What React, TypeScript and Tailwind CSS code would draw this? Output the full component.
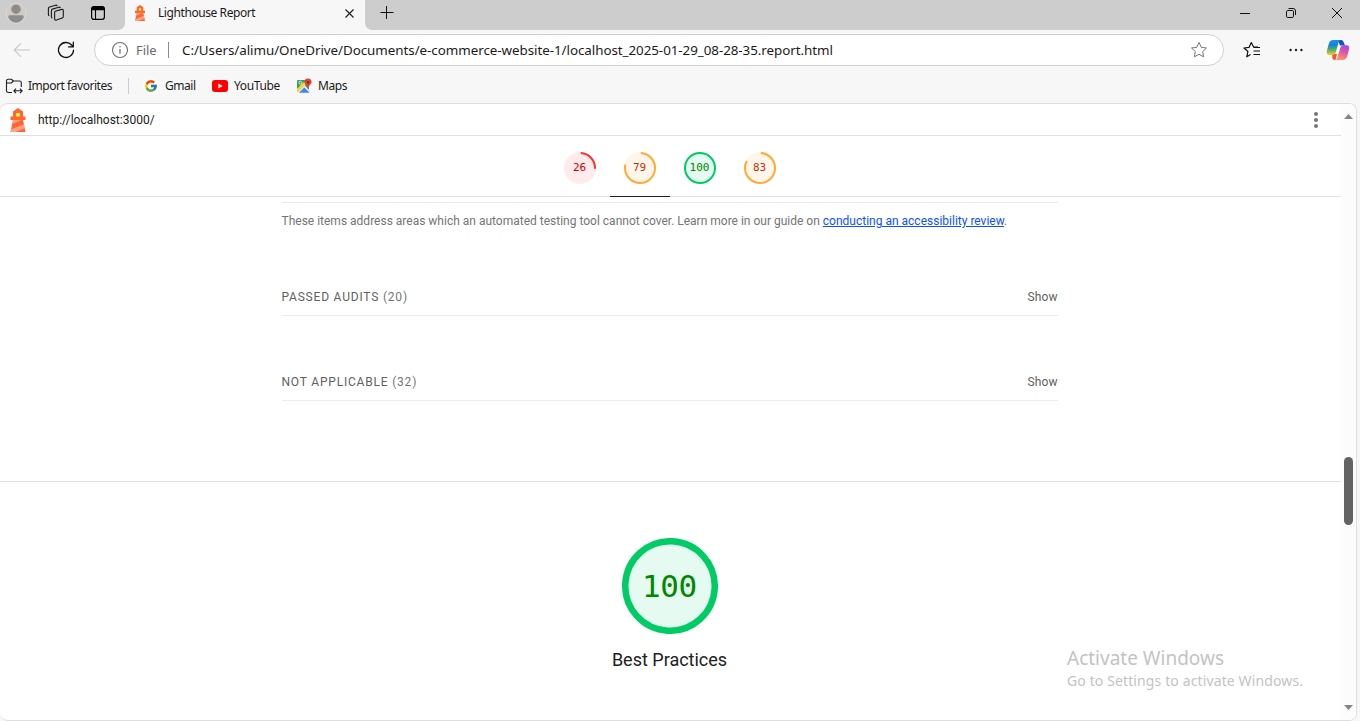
import React from 'react';
import { FcGoogle } from 'react-icons/fc';

function Lighthouse({ className }: { className: string }) {
  return (
    <svg viewBox="0 0 48 48" className={className}>
      <path d="m14 7 10-7 10 7v10h5v7h-5l5 24H9l5-24H9v-7h5V7Z" fill="#F63" />
      <path d="M31.561 24H14l-1.689 8.105L31.561 24ZM18.983 48H9l1.022-4.907L35.723 32.27l1.663 7.98L18.983 48Z" fill="#FFA385" />
      <path fill="#FF3" d="M20.5 10h7v7h-7z" />
    </svg>
  );
}

function Profile() {
  return (
    <svg viewBox="0 0 22 22" className="h-[22px] w-[22px]">
      <circle cx="11" cy="11" r="10" fill="#cfcbc7" stroke="#dcdad7" />
      <circle cx="11" cy="7.300" r="4.700" fill="#8f8b88" />
      <path d="M5.200 13.300h11.600a1.800 1.800 0 0 1 1.700 2.300C17.500 18.500 14.600 20.600 11 20.600s-6.500-2.100-7.500-5a1.800 1.800 0 0 1 1.700-2.300Z" fill="#8f8b88" />
    </svg>
  );
}

function Workspaces() {
  return (
    <svg viewBox="0 0 18 18" className="h-[18px] w-[18px]" fill="none" stroke="#1a1a1a" strokeWidth="1.1" strokeLinejoin="round">
      <path d="M8.300 7.200 14.700 5.400a1.200 1.200 0 0 1 1.600 1.100v6a1.700 1.700 0 0 1-1.200 1.600l-5.600 2a1.400 1.400 0 0 1-1.900-1.300V8.300a1.300 1.300 0 0 1 .7-1.100Z" />
      <path d="M5.300 14.200a1.500 1.500 0 0 1-.9-1.400V6.700c0-.8.400-1.300 1.100-1.600l6.200-1.900c.8-.2 1.400.100 1.700.8" />
      <path d="M2.300 11.800a1.500 1.500 0 0 1-.9-1.400V4.600c0-.8.400-1.300 1.100-1.600l6-1.800c.8-.2 1.400.1 1.700.8" />
    </svg>
  );
}

function TabActions() {
  return (
    <svg viewBox="0 0 16 16" className="h-4 w-4">
      <rect x="1.600" y="1.600" width="12.800" height="12.800" rx="2.300" fill="none" stroke="#000" strokeWidth="1.200" />
      <path d="M1.500 5.200V3.600a2.200 2.200 0 0 1 2.200-2.200h8.600a2.200 2.200 0 0 1 2.200 2.200v1.600Z" fill="#000" />
      <path d="M5.500 5v9.500" stroke="#000" strokeWidth="1.100" />
    </svg>
  );
}

function TitleBar() {
  return (
    <header className="flex h-[30px] shrink-0 items-stretch bg-[#f7f7f7]">
      <div className="flex w-[125px] items-start rounded-br-[7px] bg-[#cdcdcd] pl-[5px]">
        <div className="mt-[2px]"><Profile /></div>
        <div className="mt-1 ml-5"><Workspaces /></div>
        <div className="mt-[5px] ml-[25px]"><TabActions /></div>
      </div>
      <div className="flex w-[240px] items-start bg-[#f7f7f7] pl-[7px]">
        <Lighthouse className="mt-[5px] h-4 w-4" />
        <span className="mt-[5px] ml-[10px] w-[190px] text-[12px] leading-4 tracking-[-0.42px] whitespace-nowrap text-[#1b1b1b]">Lighthouse Report</span>
        <svg viewBox="0 0 9 9" className="mt-[9px] -ml-[3px] h-[9px] w-[9px] shrink-0" stroke="#222" strokeWidth="1.200"><path d="m.5.5 8 8m0-8-8 8" /></svg>
      </div>
      <div className="flex grow items-start rounded-bl-[7px] bg-[#cdcdcd]">
        <svg viewBox="0 0 14 14" className="mt-[6px] ml-[15px] h-[14px] w-[14px]" stroke="#111" strokeWidth="1"><path d="M.5 6.500h13M6.500 0v13" /></svg>
        <div className="grow" />
        <svg viewBox="0 0 10 10" className="mt-2 mr-9 h-[10px] w-[10px]" stroke="#111"><path d="M0 5.500h10" /></svg>
        <svg viewBox="0 0 10 10" className="mt-2 mr-9 h-[10px] w-[10px]" fill="none" stroke="#111"><rect x=".5" y="2.500" width="7" height="7" rx="1.300" /><path d="M2.500.5h4.500a2.500 2.500 0 0 1 2.500 2.500V7" /></svg>
        <svg viewBox="0 0 10 10" className="mt-2 mr-[18px] h-[10px] w-[10px]" stroke="#111"><path d="m0 0 10 10M10 0 0 10" /></svg>
      </div>
    </header>
  );
}

function Copilot() {
  return (
    <svg viewBox="0 0 24 22" className="h-[22px] w-6">
      <defs>
        <linearGradient id="cpLeft" x1="0" y1="0" x2="0" y2="1">
          <stop offset="0" stopColor="#168fe8" /><stop offset=".35" stopColor="#1683d8" /><stop offset=".65" stopColor="#4fb36a" /><stop offset=".95" stopColor="#f2c41c" />
        </linearGradient>
        <linearGradient id="cpRight" x1=".7" y1="0" x2=".4" y2="1">
          <stop offset="0" stopColor="#a14be8" /><stop offset=".45" stopColor="#dd56a5" /><stop offset="1" stopColor="#ff9567" />
        </linearGradient>
      </defs>
      <path d="M12 1h3c1.600 0 2.300 1 2.800 2.500L19 6.500h-5Z" fill="#1450c8" />
      <path d="M6 15h5l-1.500 6H9c-1.500 0-2.300-1-2.700-2.300Z" fill="#ec5a37" />
      <path d="M7.500 1h7.200c-1.200.3-1.800 1.200-2.200 2.700l-2.400 8.600C9.400 15 8.300 16 6 16H3.500C1 16 .3 14 .9 11.700l2-7.200C3.600 2.100 5 1 7.500 1Z" fill="url(#cpLeft)" />
      <path d="M16.500 21H9.300c1.200-.3 1.800-1.200 2.200-2.700L14 9.700C14.700 7 15.700 6.200 18 6.200h2.500c2.500 0 3.200 1.800 2.600 4.100l-2 7.200c-.7 2.400-2.100 3.500-4.600 3.500Z" fill="url(#cpRight)" />
      <path d="M13 7.200h2.300c-1 .5-1.500 1.400-1.900 2.800l-1 3.600c-.3 1-.8 1.500-1.700 1.500H9c1-.4 1.500-1.200 1.900-2.600l1-3.600c.2-.8.500-1.400 1.100-1.700Z" fill="#fff" />
    </svg>
  );
}

const STAR = 'M9 1.500 11.300 6.300l5.200.7-3.800 3.600.9 5.200L9 13.300l-4.600 2.500.9-5.200L1.500 7l5.200-.7Z';

function Toolbar() {
  return (
    <div className="flex h-10 shrink-0 items-center">
      <svg viewBox="0 0 18 16" className="ml-[13px] h-4 w-[18px]" fill="none" stroke="#c6c6c6" strokeWidth="1.100"><path d="M17 8H1.500M8 1.200 1.300 8 8 14.800" /></svg>
      <svg viewBox="0 0 18 18" className="ml-[26px] h-[18px] w-[18px]" fill="none" stroke="#111" strokeWidth="1.300" strokeLinecap="round"><path d="M16.500 9.200A7.500 7.500 0 1 1 14.600 4l1.600 1.700M16.300 1.200v4.700h-4.700" /></svg>
      <div className="ml-[19px] flex h-8 w-[1130px] items-center rounded-full border border-[#d0d0d0] bg-white pl-4">
        <svg viewBox="0 0 18 18" className="h-[18px] w-[18px]" fill="none" stroke="#6f6f6f" strokeWidth="1.100"><circle cx="9" cy="9" r="7.500" /><path d="M9 8v4.800M9 5v1.300" strokeWidth="1.300" /></svg>
        <span className="ml-[7px] w-8 pt-px text-[13px] tracking-[-0.05px] text-[#6a6a6a]">File</span>
        <span className="h-4 w-px bg-[#8a8a8a]" />
        <span className="ml-[13px] grow pt-px text-[13.400px] tracking-[-0.055px] whitespace-nowrap text-[#1b1b1b]">C:/Users/alimu/OneDrive/Documents/e-commerce-website-1/localhost_2025-01-29_08-28-35.report.html</span>
        <svg viewBox="0 0 18 18" className="mr-[15px] h-[18px] w-[18px]" fill="none" stroke="#767676" strokeWidth="1" strokeLinejoin="round"><path d={STAR} /></svg>
      </div>
      <svg viewBox="0 0 18 18" className="ml-[19px] h-[18px] w-[18px]" fill="none" stroke="#111" strokeWidth="1.200" strokeLinejoin="round"><path d="M7.500 13.400 3.800 15.800l1.100-5.300L1 7l5-.6L8.300 1.500 10.600 6H15M10.500 6.500H17M10.500 10H17M10.500 13.500H17" /></svg>
      <svg viewBox="0 0 14 4" className="ml-7 h-1 w-[14px]" fill="#222"><circle cx="1.600" cy="2" r="1.200" /><circle cx="7" cy="2" r="1.200" /><circle cx="12.400" cy="2" r="1.200" /></svg>
      <div className="ml-[23px]"><Copilot /></div>
    </div>
  );
}

function Favorites() {
  return (
    <div className="flex h-[33px] shrink-0 items-center pb-px text-[12px] whitespace-nowrap text-[#1b1b1b]">
      <svg viewBox="0 0 18 16" className="ml-[5px] h-4 w-[18px]" fill="none" stroke="#222" strokeWidth="1.100" strokeLinejoin="round">
        <path d="M7 14.500H3.300a1.800 1.800 0 0 1-1.800-1.800V3A1.800 1.800 0 0 1 3.300 1.200h3L8.500 3h6a1.800 1.800 0 0 1 1.800 1.800V9M1.500 5h4.800l2-2M9 12.800h8M11 10.600l-2.200 2.200L11 15M15 10.600l2.200 2.200L15 15" />
      </svg>
      <span className="ml-[5px] w-[100px] tracking-[-0.46px]">Import favorites</span>
      <span className="h-4 w-px bg-[#cccccc]" />
      <span className="ml-[14px] flex h-4 w-4 items-center justify-center rounded-full bg-white"><FcGoogle size={14} /></span>
      <span className="ml-[6px] w-[47px] tracking-[-0.45px]">Gmail</span>
      <svg viewBox="0 0 16 12" className="h-3 w-4"><rect width="16" height="12" rx="3" fill="#f00" /><path d="M6.400 3.500v5l4.300-2.500Z" fill="#fff" /></svg>
      <span className="ml-[6px] w-[62px] tracking-[-0.36px]">YouTube</span>
      <svg viewBox="0 0 16 16" className="h-4 w-4">
        <path d="M2 2h11v11.500H2a1 1 0 0 1-1-1V3a1 1 0 0 1 1-1Z" fill="#35a35a" />
        <path d="m1 13.500 7-7 6 6.500-.5 1.500H2Z" fill="#e8eaed" />
        <path d="m1 10 7-7 2.500 2.500L2.500 14Q1 14 1 12Z" fill="#f8d548" />
        <path d="m1 8 6-6h3L1 10.800Z" fill="#34a05a" />
        <path d="m3 14.800 5.300-5.300 5.300 5.300Z" fill="#4285f4" />
        <circle cx="4.300" cy="4.700" r="1.500" fill="none" stroke="#fff" strokeWidth=".8" />
        <path d="M12 .5a3.600 3.600 0 0 1 3.600 3.600c0 2.300-2.700 3.200-3.600 6.400-.9-3.200-3.600-4.100-3.600-6.400A3.600 3.600 0 0 1 12 .5Z" fill="#dc4437" />
        <circle cx="12" cy="4.200" r="1.200" fill="#8d2420" />
      </svg>
      <span className="ml-[6px] tracking-[-0.45px]">Maps</span>
    </div>
  );
}

const GAUGES = [
  { score: 26, ring: '#ff3333', fill: '#ffebeb', text: '#cc0000', selected: false },
  { score: 79, ring: '#ffaa33', fill: '#fff6eb', text: '#c33300', selected: true },
  { score: 100, ring: '#00cc66', fill: '#e5faf0', text: '#008800', selected: false },
  { score: 83, ring: '#ffaa33', fill: '#fff6eb', text: '#c33300', selected: false },
];

function Gauge({ score, ring, fill, size, stroke, rotate = -87 }: { score: number; ring: string; fill: string; size: number; stroke: number; rotate?: number }) {
  const r = size / 2 - stroke / 2;
  return (
    <svg viewBox={`0 0 ${size} ${size}`} width={size} height={size} className="col-start-1 row-start-1">
      <circle cx={size / 2} cy={size / 2} r={size / 2} fill={fill} />
      <circle cx={size / 2} cy={size / 2} r={r} fill="none" stroke={ring} strokeWidth={stroke} pathLength="100"
        strokeDasharray={score === 100 ? undefined : `${score - 1} 100`} strokeLinecap="butt" transform={`rotate(${rotate} ${size / 2} ${size / 2})`} />
    </svg>
  );
}

function Section({ title, count }: { title: string; count: number }) {
  return (
    <div className="mx-auto flex h-[39px] w-[776px] items-start justify-between border-b border-[#ebebeb] pt-[10px] text-[12px] leading-5 text-[#616161]">
      <span className="tracking-[0.8px]">{title} <span className="text-[#757575]">({count})</span></span>
      <span className="tracking-[0.1px]">Show</span>
    </div>
  );
}

function Report() {
  return (
    <main className="flex min-w-0 grow flex-col font-['Roboto',sans-serif]">
      <div className="flex h-8 shrink-0 items-center border-b border-[#e0e0e0]">
        <Lighthouse className="ml-[6px] h-6 w-6" />
        <span className="ml-2 grow text-[12px] text-[#212121]">http://localhost:3000/</span>
        <svg viewBox="0 0 4 16" className="mr-[23px] h-4 w-1" fill="#757575"><circle cx="2" cy="2" r="2" /><circle cx="2" cy="8" r="2" /><circle cx="2" cy="14" r="2" /></svg>
      </div>
      <div className="flex h-[61px] shrink-0 justify-center border-b border-[#e0e0e0] pr-[2px]">
        {GAUGES.map((g) => (
          <div key={g.score} className={g.selected ? 'grid h-[61px] w-[60px] grid-rows-[100%] items-start justify-items-center border-b border-[#212121] pt-4' : 'grid h-[61px] w-[60px] items-start justify-items-center pt-4'}>
            <Gauge score={g.score} ring={g.ring} fill={g.fill} size={32} stroke={2} />
            <span className="z-10 col-start-1 row-start-1 font-['DejaVu_Sans_Mono',monospace] text-[11px] leading-8" style={{ color: g.text }}>{g.score}</span>
          </div>
        ))}
      </div>
      <div className="flex grow flex-col pr-[2px]">
        <div className="mx-auto mt-[5px] h-[39px] w-[776px] shrink-0 border-t border-[#ebebeb] pt-2 text-[12px] leading-5 whitespace-nowrap text-[#757575]">
          These items address areas which an automated testing tool cannot cover. Learn more in our guide on <a className="text-[#0c50ff] underline">conducting an accessibility review</a>.
        </div>
        <div className="mt-9 shrink-0"><Section title="PASSED AUDITS" count={20} /></div>
        <div className="mt-[46px] shrink-0"><Section title="NOT APPLICABLE" count={32} /></div>
        <div className="mt-20 -mr-[2px] flex grow flex-col items-center border-t border-[#e0e0e0] pt-14 pr-[2px]">
          <div className="grid items-center justify-items-center">
            <Gauge score={100} ring="#00cc66" fill="#e5faf0" size={96} stroke={6.5} />
            <span className="z-10 col-start-1 row-start-1 font-['DejaVu_Sans_Mono',monospace] text-[31px] tracking-[-0.4px] text-[#008800]">100</span>
          </div>
          <div className="mt-[14px] text-[18px] leading-6 text-[#212121]">Best Practices</div>
        </div>
      </div>
    </main>
  );
}

export default function App() {
  return (
    <div className="relative flex h-[721px] w-[1360px] flex-col overflow-hidden bg-[#f7f7f7] font-['Noto_Sans','Open_Sans',sans-serif]">
      <TitleBar />
      <Toolbar />
      <Favorites />
      <div className="mr-[3px] flex h-[618px] shrink-0 overflow-hidden rounded-[8px] border-y border-r border-[#dedede] bg-white">
        <Report />
        <div className="flex w-[15px] shrink-0 flex-col items-center bg-[#fcfcfc]">
          <svg viewBox="0 0 9 5" className="mt-[10px] h-[5px] w-[9px]" fill="#858585"><path d="M4.500 0 9 5H0Z" /></svg>
          <div className="mt-[338px] h-[68px] w-[9px] rounded-full bg-[#636363]" />
          <div className="grow" />
          <svg viewBox="0 0 9 5" className="mb-[10px] h-[5px] w-[9px]" fill="#858585"><path d="M4.500 5 9 0H0Z" /></svg>
        </div>
      </div>
      <div className="absolute top-[646px] left-[1067px] whitespace-nowrap text-[#c3c3c3]">
        <div className="text-[19px] leading-6">Activate Windows</div>
        <div className="text-[14px] leading-[22px] tracking-[0.12px]">Go to Settings to activate Windows.</div>
      </div>
    </div>
  );
}
